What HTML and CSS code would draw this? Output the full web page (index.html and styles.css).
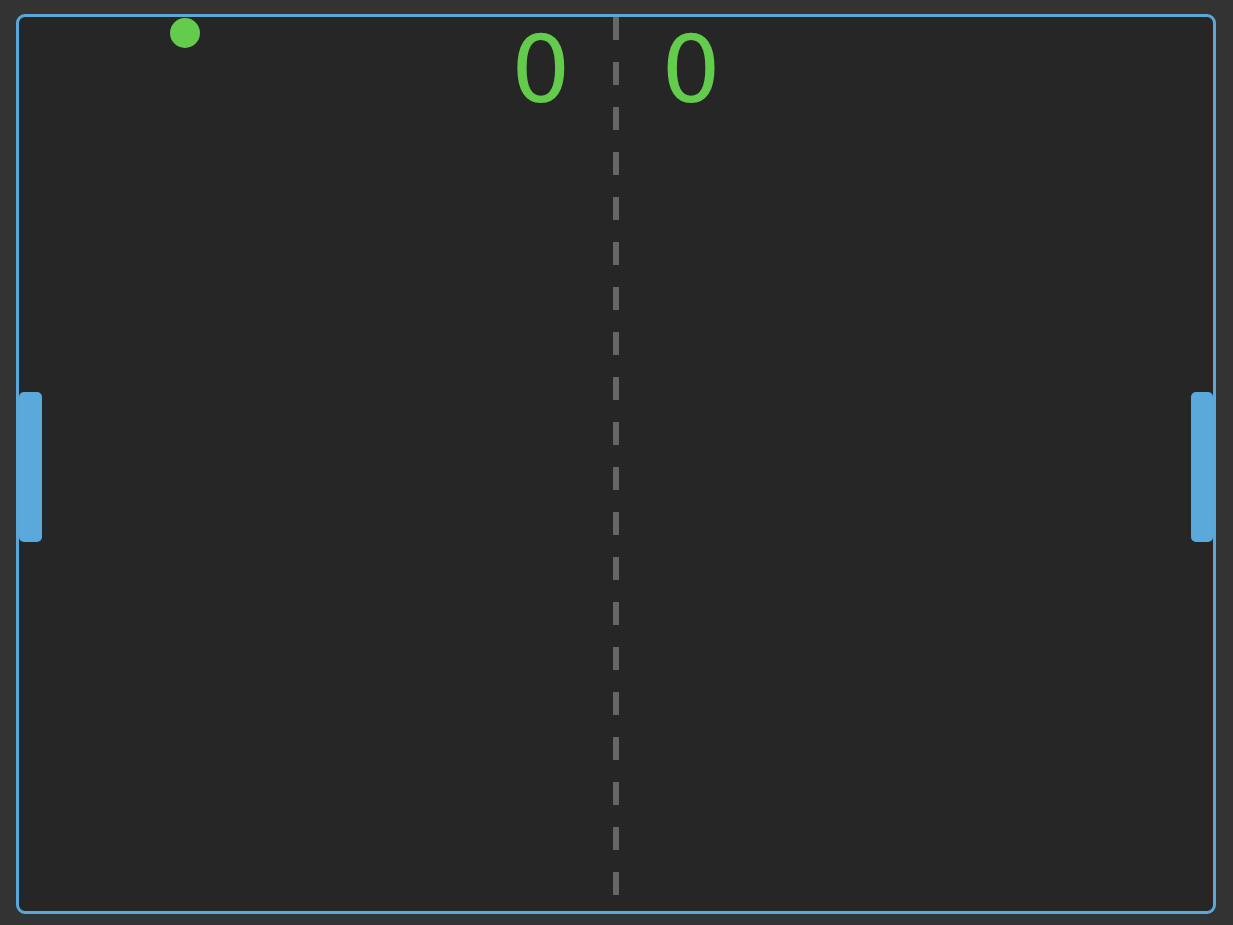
FILE: index.html
```html
<!DOCTYPE html>
<html>
<head>
<meta charset="utf-8">
<link rel="stylesheet" href="styles.css">
</head>
<body>
<div class="court">
  <div class="net"></div>
  <div class="scores"><span class="score">0</span><span class="score">0</span></div>
  <div class="ball"></div>
  <div class="paddle paddle-left"></div>
  <div class="paddle paddle-right"></div>
</div>
</body>
</html>
```
FILE: styles.css
```css
html, body {
  margin: 0;
  padding: 0;
  background: #333333;
}
body {
  padding: 14px 16px;
  width: 1233px;
  height: 925px;
  box-sizing: border-box;
  overflow: hidden;
}
.court {
  position: relative;
  width: 1194px;
  height: 894px;
  border: 3px solid #5aa8da;
  border-radius: 9px;
  background: #262626;
}
.net {
  position: absolute;
  left: 594px;
  top: 0;
  width: 6px;
  height: 880px;
  background: repeating-linear-gradient(to bottom, #666666 0, #666666 23px, transparent 23px, transparent 45px);
}
.scores {
  display: flex;
  justify-content: center;
  gap: 91px;
  padding-top: 7px;
  font-family: "DejaVu Sans", sans-serif;
  font-size: 93px;
  line-height: 1;
  color: #64cc4c;
}
.ball {
  position: absolute;
  left: 151px;
  top: 1px;
  width: 30px;
  height: 30px;
  border-radius: 50%;
  background: #64cc4c;
}
.paddle {
  position: absolute;
  top: 375px;
  width: 23px;
  height: 150px;
  border-radius: 5px;
  background: #5ba9db;
}
.paddle-left { left: 0; }
.paddle-right { right: 0; width: 22px; }
```
